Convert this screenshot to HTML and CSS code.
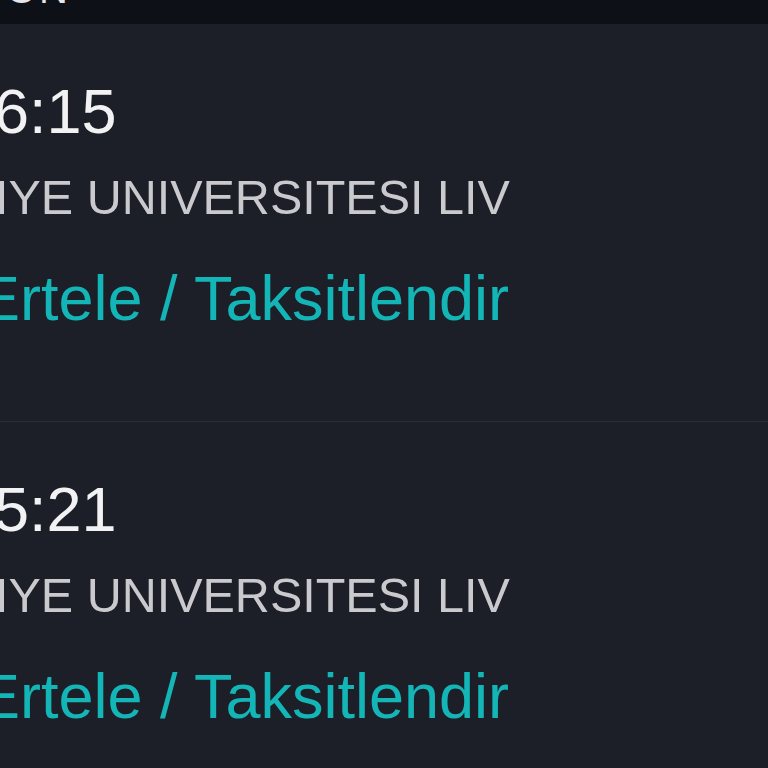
FILE: index.html
```html
<!DOCTYPE html>
<html lang="tr">
<head>
<meta charset="utf-8">
<link rel="stylesheet" href="styles.css">
</head>
<body>
<div class="screen">
  <header class="topbar"><span class="topbar-title">ON</span></header>
  <ul class="list">
    <li class="item">
      <div class="time">6:15</div>
      <div class="merchant">IYE UNIVERSITESI LIV</div>
      <div class="action">Ertele / Taksitlendir</div>
    </li>
    <li class="item">
      <div class="time">5:21</div>
      <div class="merchant">IYE UNIVERSITESI LIV</div>
      <div class="action">Ertele / Taksitlendir</div>
    </li>
  </ul>
</div>
</body>
</html>
```
FILE: styles.css
```css
html, body {
  margin: 0;
  padding: 0;
  background: #1c1f27;
}
.screen {
  width: 768px;
  height: 768px;
  overflow: hidden;
  font-family: "Liberation Sans", Arial, Helvetica, sans-serif;
  background: #1c1f27;
}
.topbar {
  height: 24px;
  background: #0d1017;
  overflow: hidden;
}
.topbar-title {
  display: block;
  color: #e6e6ea;
  font-size: 40px;
  line-height: 40px;
  margin-top: -31px;
  margin-left: 6px;
  letter-spacing: 2px;
}
.list {
  list-style: none;
  margin: 0;
  padding: 0;
}
.item {
  height: 398px;
  padding-top: 56px;
  border-bottom: 1px solid #2a2d35;
  box-sizing: border-box;
}
.time {
  color: #f2f2f4;
  font-size: 63px;
  line-height: 62px;
  margin-left: -6px;
}
.merchant {
  color: #c9c9ce;
  font-size: 48.5px;
  line-height: 51px;
  margin-top: 30px;
  margin-left: -5px;
  white-space: nowrap;
}
.action {
  color: #14b5b7;
  font-size: 63px;
  line-height: 62px;
  margin-top: 44px;
  margin-left: -22px;
  white-space: nowrap;
}
```
